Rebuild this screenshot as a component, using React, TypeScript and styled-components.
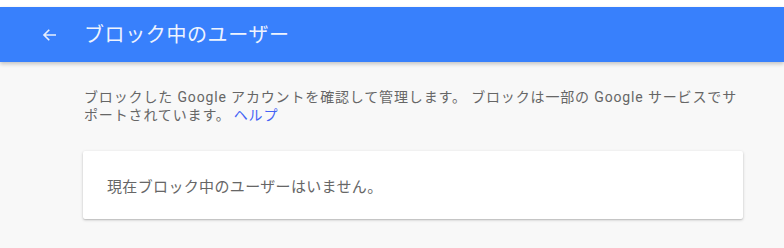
import type { FC } from 'react'
import styled, { createGlobalStyle } from 'styled-components'

const GlobalStyle = createGlobalStyle`
  html,
  body {
    margin: 0;
    padding: 0;
    background-color: #ffffff;
  }

  body {
    font-family: Roboto, 'Noto Sans CJK JP', sans-serif;
    -webkit-font-smoothing: antialiased;
  }
`

const Page = styled.div`
  background-color: #f8f8f8;
  margin-top: 7px;
  min-height: 241px;
`

const Header = styled.header`
  align-items: center;
  background-color: #3880fc;
  box-shadow: 0 2px 4px rgba(0, 0, 0, 0.22);
  display: flex;
  height: 55px;
  padding: 0 0 0 40px;
  position: relative;
`

const BackButton = styled.button`
  align-items: center;
  background: none;
  border: 0;
  color: #e6eefc;
  cursor: pointer;
  display: flex;
  height: 20px;
  justify-content: center;
  margin: 0 24px 0 0;
  padding: 0;
  width: 20px;
`

const Title = styled.h1`
  color: #eef3fe;
  font-family: Roboto, 'Noto Sans CJK JP', sans-serif;
  font-size: 20px;
  font-weight: 400;
  letter-spacing: 0.6px;
  line-height: 1;
  margin: 0;
`

const Content = styled.main`
  display: flex;
  flex-direction: column;
  padding: 26px 41px 29px 83px;
  row-gap: 27px;
`

const Description = styled.p`
  color: #666666;
  font-size: 14px;
  letter-spacing: 0.85px;
  line-height: 18px;
  margin: 0 0 0 1px;
`

const HelpLink = styled.a`
  color: #4463f5;
  margin-left: 3px;
  text-decoration: none;
`

const Card = styled.section`
  align-items: center;
  background-color: #ffffff;
  border-radius: 2px;
  box-shadow: 0 1px 3px rgba(0, 0, 0, 0.22), 0 1px 1px rgba(0, 0, 0, 0.08);
  display: flex;
  height: 68px;
  padding: 0 24px;
`

const CardText = styled.span`
  color: #666666;
  font-size: 15px;
  letter-spacing: 0.35px;
`

const ArrowIcon: FC = () => (
  <svg width="18" height="18" viewBox="0 0 24 24" fill="none">
    <path
      d="M20 12H4.5M11 5l-7 7 7 7"
      stroke="currentColor"
      strokeWidth="2.2"
    />
  </svg>
)

const App: FC = () => {
  return (
    <>
      <GlobalStyle />
      <Page>
        <Header>
          <BackButton aria-label="戻る">
            <ArrowIcon />
          </BackButton>
          <Title>ブロック中のユーザー</Title>
        </Header>
        <Content>
          <Description>
            ブロックした Google アカウントを確認して管理します。 ブロックは一部の Google サービスでサポートされています。
            <HelpLink href="#">ヘルプ</HelpLink>
          </Description>
          <Card>
            <CardText>現在ブロック中のユーザーはいません。</CardText>
          </Card>
        </Content>
      </Page>
    </>
  )
}

export default App
